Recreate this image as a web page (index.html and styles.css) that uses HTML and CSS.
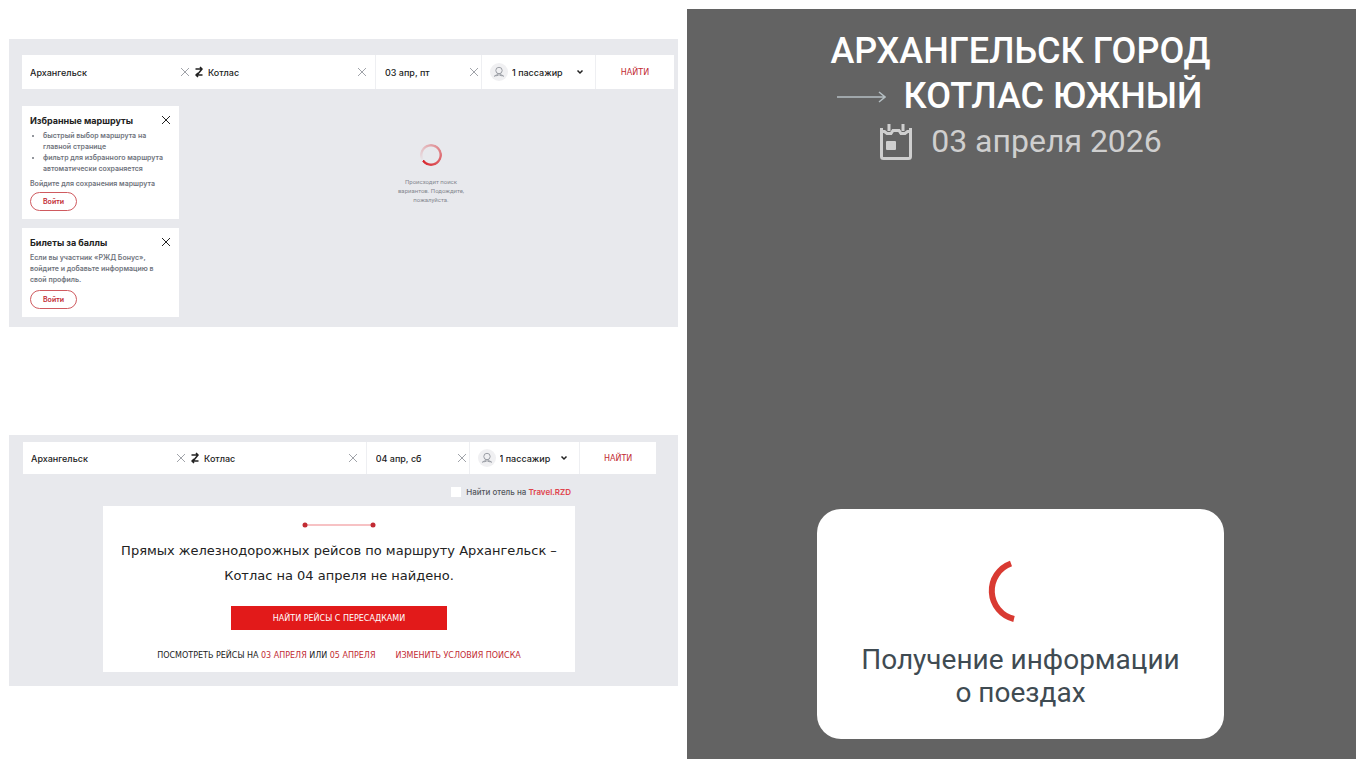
FILE: index.html
```html
<!DOCTYPE html>
<html lang="ru">
<head>
    <meta charset="UTF-8">
    <meta name="viewport" content="width=device-width, initial-scale=1.0">
    <title>Архангельск – Котлас</title>
    <link rel="stylesheet" href="styles.css">
</head>
<body>
    <svg class="sprite" aria-hidden="true">
        <symbol id="cross" viewBox="0 0 10 10"><path d="M1 1l8 8M9 1l-8 8"/></symbol>
        <symbol id="swap" viewBox="0 0 8 12"><path d="M.5 3h6.500M5 1l2 2-4.500 5.500M7.500 9H1M3 7L1 9l2 2"/></symbol>
        <symbol id="person" viewBox="0 0 18 18"><circle cx="9" cy="7.500" r="3.200"/><path d="M7.500 10.300v1.200c-1 .5-2.500.6-3 2.200M10.500 10.300v1.200c1 .5 2.500.6 3 2.200M4.500 12.700h2.500l2-1 2 1h2.500"/></symbol>
        <symbol id="chevron" viewBox="0 0 8 6"><path d="M1.500 1.500L4 4l2.500-2.500"/></symbol>
    </svg>

    <main class="screens">
        <div class="site">
            <section class="panel panel-loading">
                <form class="search">
                    <div class="field">
                        <input type="text" aria-label="Откуда" value="Архангельск">
                        <button type="button" class="clear" aria-label="Очистить"><svg><use href="#cross"/></svg></button>
                    </div>
                    <div class="field field-to">
                        <button type="button" class="swap" aria-label="Поменять местами"><svg><use href="#swap"/></svg></button>
                        <input type="text" aria-label="Куда" value="Котлас">
                        <button type="button" class="clear" aria-label="Очистить"><svg><use href="#cross"/></svg></button>
                    </div>
                    <div class="field field-date">
                        <input type="text" aria-label="Дата" value="03 апр, пт">
                        <button type="button" class="clear" aria-label="Очистить"><svg><use href="#cross"/></svg></button>
                    </div>
                    <div class="field field-people">
                        <svg class="person"><use href="#person"/></svg>
                        <select aria-label="Пассажиры"><option>1 пассажир</option></select>
                        <svg class="chevron"><use href="#chevron"/></svg>
                    </div>
                    <button type="submit" class="find">НАЙТИ</button>
                </form>

                <div class="content">
                    <aside class="cards">
                        <article class="card">
                            <header>
                                <h2>Избранные маршруты</h2>
                                <button type="button" class="close" aria-label="Закрыть"><svg><use href="#cross"/></svg></button>
                            </header>
                            <ul>
                                <li>быстрый выбор маршрута на главной странице</li>
                                <li>фильтр для избранного маршрута автоматически сохраняется</li>
                            </ul>
                            <p>Войдите для сохранения маршрута</p>
                            <button type="button" class="login">Войти</button>
                        </article>
                        <article class="card card-bonus">
                            <header>
                                <h2>Билеты за баллы</h2>
                                <button type="button" class="close" aria-label="Закрыть"><svg><use href="#cross"/></svg></button>
                            </header>
                            <p>Если вы участник «РЖД Бонус», войдите и добавьте информацию в свой профиль.</p>
                            <button type="button" class="login">Войти</button>
                        </article>
                    </aside>
                    <div class="loader">
                        <div class="ring"></div>
                        <p>Происходит поиск вариантов. Подождите, пожалуйста.</p>
                    </div>
                </div>
            </section>

            <section class="panel panel-empty">
                <form class="search search-small">
                    <div class="field">
                        <input type="text" aria-label="Откуда" value="Архангельск">
                        <button type="button" class="clear" aria-label="Очистить"><svg><use href="#cross"/></svg></button>
                    </div>
                    <div class="field field-to">
                        <button type="button" class="swap" aria-label="Поменять местами"><svg><use href="#swap"/></svg></button>
                        <input type="text" aria-label="Куда" value="Котлас">
                        <button type="button" class="clear" aria-label="Очистить"><svg><use href="#cross"/></svg></button>
                    </div>
                    <div class="field field-date">
                        <input type="text" aria-label="Дата" value="04 апр, сб">
                        <button type="button" class="clear" aria-label="Очистить"><svg><use href="#cross"/></svg></button>
                    </div>
                    <div class="field field-people">
                        <svg class="person"><use href="#person"/></svg>
                        <select aria-label="Пассажиры"><option>1 пассажир</option></select>
                        <svg class="chevron"><use href="#chevron"/></svg>
                    </div>
                    <button type="submit" class="find">НАЙТИ</button>
                </form>

                <div class="results">
                    <div class="hotel">
                        <input type="checkbox" id="hotel">
                        <label for="hotel">Найти отель на <a href="#">Travel.RZD</a></label>
                    </div>
                    <div class="message">
                        <svg class="route" viewBox="0 0 74 6">
                            <path d="M3 3h68"/>
                            <circle cx="3" cy="3" r="2.500"/>
                            <circle cx="71" cy="3" r="2.500"/>
                        </svg>
                        <h1>Прямых железнодорожных рейсов по маршруту Архангельск – Котлас на 04 апреля не найдено.</h1>
                        <button type="button" class="transfers">НАЙТИ РЕЙСЫ С ПЕРЕСАДКАМИ</button>
                        <div class="links">
                            <p>ПОСМОТРЕТЬ РЕЙСЫ НА <a href="#">03 АПРЕЛЯ</a> ИЛИ <a href="#">05 АПРЕЛЯ</a></p>
                            <a href="#">ИЗМЕНИТЬ УСЛОВИЯ ПОИСКА</a>
                        </div>
                    </div>
                </div>
            </section>
        </div>

        <section class="phone">
            <header class="trip">
                <div>АРХАНГЕЛЬСК ГОРОД</div>
                <div class="trip-to">
                    <svg class="arrow" viewBox="0 0 50 12"><path d="M1 6h48M43 1l6 5-6 5"/></svg>
                    <span>КОТЛАС ЮЖНЫЙ</span>
                </div>
                <div class="trip-date">
                    <svg class="calendar" viewBox="0 0 34 38">
                        <path class="frame" d="M2.500 5V33.500Q2.500 35.500 4.500 35.500H29.500Q31.500 35.500 31.500 33.500V5"/>
                        <path class="frame" d="M2 8.500H5.500L8 10.500H12L14 7.500H20L22 10.500H26L28.500 8.500H32"/>
                        <path class="frame" d="M10 1v7M24 1v7"/>
                        <rect x="7" y="18" width="10" height="9" rx="1"/>
                    </svg>
                    <span>03 апреля 2026</span>
                </div>
            </header>
            <div class="dialog" role="status">
                <svg class="arc" viewBox="0 0 66 66"><path d="M24 5.500A29 29 0 0 0 27 61"/></svg>
                <p>Получение информации<br>о поездах</p>
            </div>
        </section>
    </main>
</body>
</html>
```

FILE: styles.css
```css
* {
    box-sizing: border-box;
}
body {
    margin: 0;
    background-color: #fff;
    color: #222;
    font-family: Inter, sans-serif;
}
h1, h2, p, ul {
    margin: 0;
    padding: 0;
}
button, input, select {
    font: inherit;
    color: inherit;
    margin: 0;
    padding: 0;
    border: 0;
    background: none;
}
button {
    cursor: pointer;
}
a {
    color: #c22b33;
    text-decoration: none;
}
svg {
    display: block;
    flex: none;
    fill: none;
    stroke: currentColor;
}
.sprite {
    display: none;
}
.screens {
    display: grid;
    grid-template-columns: 1fr 1fr;
    gap: 9px;
    min-height: 100vh;
    padding: 9px 10px 9px 9px;
}
.site {
    padding-top: 30px;
}
.panel {
    background-color: #e8e9ed;
}
.panel-loading {
    padding: 16px 4px 10px 13px;
    margin-bottom: 108px;
}
.panel-empty {
    padding: 7px 22px 14px 14px;
}

/* search bar */
.search {
    display: grid;
    grid-template-columns: 168fr 185fr 106fr 114fr 79fr;
    height: 34px;
    background-color: #fff;
    font-size: 9px;
    font-weight: 500;
}
.search-small {
    height: 32px;
}
.field {
    display: flex;
    align-items: center;
    min-width: 0;
    padding-left: 8px;
}
.field input {
    flex: 1;
    min-width: 0;
    width: 0;
}
.field-to {
    padding-left: 5px;
    padding-right: 8px;
}
.field-date, .field-people, .find {
    border-left: 1px solid #eeeff2;
}
.field-date {
    padding-left: 9px;
    padding-right: 2px;
}
.clear svg {
    width: 10px;
    height: 10px;
    color: #a0a3a9;
}
.swap {
    margin-right: 5px;
}
.swap svg {
    width: 8px;
    height: 12px;
    stroke-width: 1.500;
}
.person {
    width: 18px;
    height: 18px;
    margin-right: 4px;
    border-radius: 50%;
    background-color: #f0f0f2;
    color: #9b9ea5;
}
.field select {
    appearance: none;
    flex: 1;
    min-width: 0;
}
.chevron {
    width: 8px;
    height: 6px;
    margin-right: 11px;
    stroke-width: 1.500;
}
.find {
    font-family: "DejaVu Sans", sans-serif;
    font-size: 8px;
    color: #c22b33;
}

/* promo cards */
.content {
    display: grid;
    grid-template-columns: 157px 1fr;
    gap: 9px;
    margin-top: 17px;
}
.card {
    padding: 8px;
    background-color: #fff;
    color: #70747d;
    font-size: 7px;
    font-weight: 600;
    line-height: 11px;
}
.card + .card {
    margin-top: 9px;
}
.card header {
    display: flex;
    justify-content: space-between;
    align-items: center;
    height: 12px;
    margin-bottom: 4px;
    color: #222;
}
.card h2 {
    font-size: 9px;
    font-weight: 700;
}
.close svg {
    width: 10px;
    height: 10px;
}
.card ul {
    padding-left: 13px;
    margin-bottom: 4px;
}
.card .login {
    display: block;
    height: 19px;
    padding: 0 12px;
    margin-top: 3px;
    border: 1px solid #cf5a5f;
    border-radius: 10px;
    color: #c22b33;
}
.card-bonus p {
    padding-right: 12px;
}
.card-bonus .login {
    margin-top: 5px;
}
.loader {
    padding-top: 38px;
    color: #85888f;
    font-family: Roboto, sans-serif;
    font-size: 6px;
    line-height: 9px;
    text-align: center;
}
.loader p {
    width: 72px;
    margin: 11px auto 0;
}
.ring {
    width: 22px;
    height: 22px;
    margin: 0 auto;
    border-radius: 50%;
    background: conic-gradient(from 235deg, transparent, #d8232a);
    mask: radial-gradient(circle, transparent 8px, #000 9px);
}

/* empty result */
.results {
    margin: 12px 81px 0 80px;
}
.hotel {
    display: flex;
    justify-content: flex-end;
    align-items: center;
    gap: 5px;
    height: 12px;
    margin-bottom: 8px;
    padding-right: 4px;
    font-size: 8px;
    font-weight: 500;
    color: #55585f;
}
.hotel input {
    appearance: none;
    width: 10px;
    height: 10px;
    background-color: #fff;
}
.hotel a {
    color: #e0444c;
    font-weight: 600;
}
.message {
    display: flex;
    flex-direction: column;
    align-items: center;
    padding: 16px 12px 11px;
    background-color: #fff;
    font-family: "DejaVu Sans", sans-serif;
    font-size: 8px;
    text-align: center;
}
.route {
    width: 74px;
    height: 6px;
    stroke: #f5aeb0;
    stroke-width: 1.500;
}
.route circle {
    fill: #c22b33;
    stroke: none;
}
.message h1 {
    margin-top: 10px;
    font-size: 13px;
    font-weight: 400;
    line-height: 25px;
}
.transfers {
    width: 216px;
    height: 24px;
    margin: 18px 0 20px;
    background-color: #e21a1a;
    color: #fff;
}
.links {
    display: flex;
    gap: 20px;
    line-height: 11px;
}

/* mobile screen */
.phone {
    display: flex;
    flex-direction: column;
    justify-content: space-between;
    align-items: center;
    padding: 20px 2px 20px 0;
    background-color: #636363;
    font-family: Roboto, sans-serif;
}
.trip {
    color: #fff;
    font-size: 36px;
    font-weight: 500;
    line-height: 45px;
    text-align: center;
}
.trip-to, .trip-date {
    display: flex;
    justify-content: center;
    align-items: center;
    gap: 18px;
}
.arrow {
    width: 50px;
    height: 12px;
    color: #b5bfc3;
    stroke-width: 1.500;
}
.trip-to {
    padding-right: 3px;
}
.trip-date {
    color: #cfcfcf;
    font-size: 32px;
    font-weight: 400;
}
.calendar {
    width: 34px;
    height: 38px;
    stroke-width: 3;
}
.calendar rect {
    fill: currentColor;
    stroke: none;
}
.dialog {
    display: flex;
    flex-direction: column;
    align-items: center;
    width: 61%;
    padding: 49px 0 30px;
    border-radius: 24px;
    background-color: #fff;
    color: #3f4b52;
    font-size: 28px;
    line-height: 33px;
    text-align: center;
}
.arc {
    width: 66px;
    height: 66px;
    margin-bottom: 19px;
    color: #d93a32;
    stroke-width: 6;
}
```
